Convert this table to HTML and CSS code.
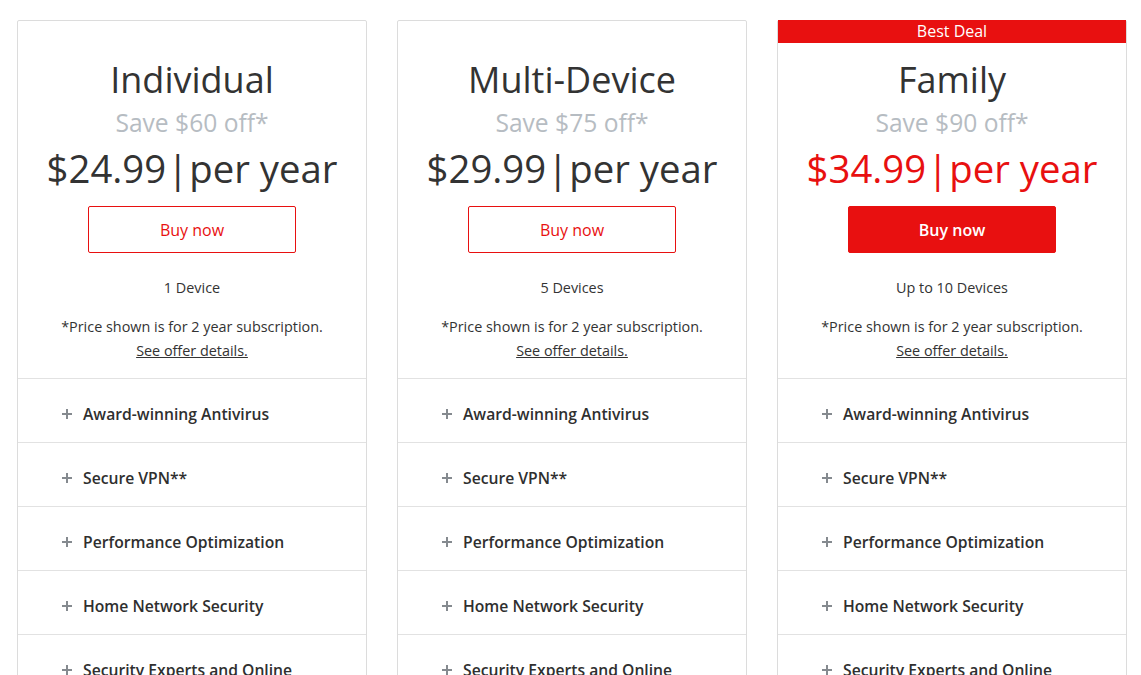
FILE: index.html
```html
<!DOCTYPE html>
<html>
<head>
<meta charset="utf-8">
<link rel="stylesheet" href="styles.css">
</head>
<body>
<div class="plans">
  <div class="card">
    <div class="head">
      <h2 class="title">Individual</h2>
      <div class="save">Save $60 off*</div>
      <div class="price">$24.99<span class="sep">|</span>per year</div>
      <a class="btn">Buy now</a>
      <div class="devices">1 Device</div>
      <div class="note">*Price shown is for 2 year subscription.</div>
      <a class="details">See offer details.</a>
    </div>
    <ul class="features">
      <li><span class="plus"></span><span>Award-winning Antivirus</span></li>
      <li><span class="plus"></span><span>Secure VPN**</span></li>
      <li><span class="plus"></span><span>Performance Optimization</span></li>
      <li><span class="plus"></span><span>Home Network Security</span></li>
      <li><span class="plus"></span><span>Security Experts and Online Support</span></li>
    </ul>
  </div>
  <div class="card">
    <div class="head">
      <h2 class="title">Multi-Device</h2>
      <div class="save">Save $75 off*</div>
      <div class="price">$29.99<span class="sep">|</span>per year</div>
      <a class="btn">Buy now</a>
      <div class="devices">5 Devices</div>
      <div class="note">*Price shown is for 2 year subscription.</div>
      <a class="details">See offer details.</a>
    </div>
    <ul class="features">
      <li><span class="plus"></span><span>Award-winning Antivirus</span></li>
      <li><span class="plus"></span><span>Secure VPN**</span></li>
      <li><span class="plus"></span><span>Performance Optimization</span></li>
      <li><span class="plus"></span><span>Home Network Security</span></li>
      <li><span class="plus"></span><span>Security Experts and Online Support</span></li>
    </ul>
  </div>
  <div class="card featured">
    <div class="badge">Best Deal</div>
    <div class="head">
      <h2 class="title">Family</h2>
      <div class="save">Save $90 off*</div>
      <div class="price">$34.99<span class="sep">|</span>per year</div>
      <a class="btn">Buy now</a>
      <div class="devices">Up to 10 Devices</div>
      <div class="note">*Price shown is for 2 year subscription.</div>
      <a class="details">See offer details.</a>
    </div>
    <ul class="features">
      <li><span class="plus"></span><span>Award-winning Antivirus</span></li>
      <li><span class="plus"></span><span>Secure VPN**</span></li>
      <li><span class="plus"></span><span>Performance Optimization</span></li>
      <li><span class="plus"></span><span>Home Network Security</span></li>
      <li><span class="plus"></span><span>Security Experts and Online Support</span></li>
    </ul>
  </div>
</div>
</body>
</html>
```

FILE: styles.css
```css
* { box-sizing: border-box; }
html, body { margin: 0; padding: 0; background: #fff; }
body {
  font-family: "Open Sans", "Liberation Sans", sans-serif;
  color: #333;
}
.plans {
  display: flex;
  gap: 30px;
  padding: 20px 0 0 17px;
}
.card {
  position: relative;
  width: 350px;
  border: 1px solid #dcdcdc;
  border-radius: 2px;
  flex: none;
}
.badge {
  position: absolute;
  top: -1px;
  left: 0;
  right: 0;
  height: 23px;
  background: #e81010;
  color: #fff;
  font-size: 16px;
  line-height: 23px;
  text-align: center;
}
.head {
  display: flex;
  flex-direction: column;
  align-items: center;
  padding: 36px 0 17px;
  border-bottom: 1px solid #e2e2e2;
}
.title {
  margin: 0;
  font-size: 36px;
  font-weight: 400;
  line-height: 46px;
  color: #333;
}
.save {
  font-size: 24.6px;
  line-height: 28px;
  color: #b6bcc2;
  margin-top: 6px;
}
.price {
  font-size: 38.3px;
  line-height: 48px;
  color: #333;
  margin-top: 7px;
}
.sep { margin: 0 1px; }
.featured .price { color: #e81010; }
.btn {
  display: flex;
  align-items: center;
  justify-content: center;
  width: 208px;
  height: 47px;
  margin-top: 14px;
  border: 1px solid #e81010;
  border-radius: 2px;
  color: #e81010;
  font-size: 16px;
}
.featured .btn {
  background: #e81010;
  color: #fff;
  font-weight: 600;
}
.devices {
  margin-top: 25px;
  font-size: 14.4px;
  line-height: 20px;
}
.note {
  margin-top: 19px;
  font-size: 14.4px;
  line-height: 20px;
}
.details {
  margin-top: 4px;
  font-size: 14.4px;
  line-height: 20px;
  text-decoration: underline;
  color: #333;
}
.features {
  list-style: none;
  margin: 0;
  padding: 0;
}
.features li {
  display: flex;
  align-items: flex-start;
  padding: 25px 30px 18px 44px;
  border-bottom: 1px solid #e2e2e2;
  font-size: 15.7px;
  line-height: 20px;
  font-weight: 600;
  color: #2f2f2f;
}
.plus {
  position: relative;
  width: 10px;
  height: 10px;
  margin: 5px 11px 0 0;
  flex: none;
}
.plus::before, .plus::after {
  content: "";
  position: absolute;
  background: #858a8f;
}
.plus::before { left: 0; right: 0; top: 4px; height: 2px; }
.plus::after { top: 0; bottom: 0; left: 4px; width: 2px; }
```
